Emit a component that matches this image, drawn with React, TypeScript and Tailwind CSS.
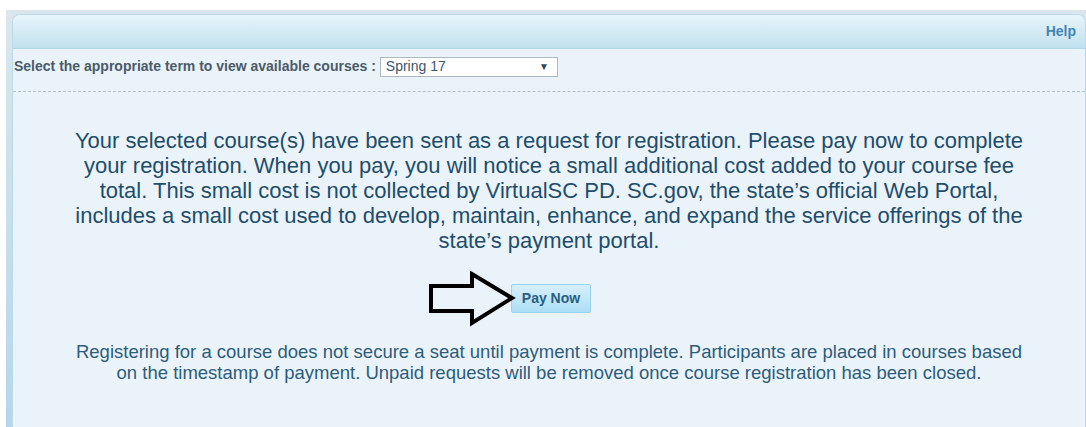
import React from "react";

function ArrowMark() {
  return (
    <svg width="88" height="56" viewBox="0 0 88 56" className="absolute right-full top-1/2 -translate-y-1/2 -mr-[5px]">
      <path
        d="M3 15 L44 15 L44 3 L84 27 L44 52 L44 40 L3 40 Z"
        fill="none"
        stroke="#000"
        strokeWidth="4"
        strokeLinejoin="miter"
      />
    </svg>
  );
}

export default function App() {
  return (
    <div className="h-[427px] w-[1086px] bg-white pt-[10px] pl-[6px] overflow-hidden" style={{ fontFamily: '"Liberation Sans", Arial, sans-serif' }}>
      <div className="h-full bg-gradient-to-b from-[#dbe6ec] to-[#b4d7ea] pt-[4px] pl-[6px]">
        <div className="h-full rounded-t-[8px] border-l border-t border-r border-[#b9dbec] bg-[#eaf3f9] overflow-hidden">
          <div className="h-[34px] flex items-center justify-end pr-[9px] bg-gradient-to-b from-[#e8f4fb] to-[#c1e1ef] border-b border-[#b4d6e7]">
            <span className="text-[14px] font-bold text-[#3f86b6]">Help</span>
          </div>
          <div className="flex items-center pt-[7px] pl-[1px]">
            <span className="text-[14px] font-bold text-[#4b5b69]">
              Select the appropriate term to view available courses :
            </span>
            <div className="ml-[4px] w-[178px] h-[20px] border border-[#aab9c3] bg-white flex items-center justify-between pl-[5px] pr-[8px]">
              <span className="text-[14px] text-[#3b5670]">Spring 17</span>
              <span className="text-[10px] text-[#2f4a60]">▼</span>
            </div>
          </div>
          <div className="mt-[14px] border-t border-dashed border-[#b3c3cd]" />
          <p className="mt-[36px] text-center text-[22px] leading-[25px] text-[#1f4d6b]">
            Your selected course(s) have been sent as a request for registration. Please pay now to complete
            <br />
            your registration. When you pay, you will notice a small additional cost added to your course fee
            <br />
            total. This small cost is not collected by VirtualSC PD. SC.gov, the state’s official Web Portal,
            <br />
            includes a small cost used to develop, maintain, enhance, and expand the service offerings of the
            <br />
            state’s payment portal.
          </p>
          <div className="mt-[31px] flex justify-center pl-[4px]">
            <div className="relative">
              <ArrowMark />
              <button className="w-[80px] h-[29px] rounded-[2px] border border-[#96d3f0] bg-gradient-to-b from-[#d6effc] via-[#c3e7f9] to-[#abdef6] text-[14px] font-bold text-[#2b5e82]">
                Pay Now
              </button>
            </div>
          </div>
          <p className="mt-[28px] text-center text-[18.5px] leading-[21px] text-[#2e5c7b]">
            Registering for a course does not secure a seat until payment is complete. Participants are placed in courses based
            <br />
            on the timestamp of payment. Unpaid requests will be removed once course registration has been closed.
          </p>
        </div>
      </div>
    </div>
  );
}
